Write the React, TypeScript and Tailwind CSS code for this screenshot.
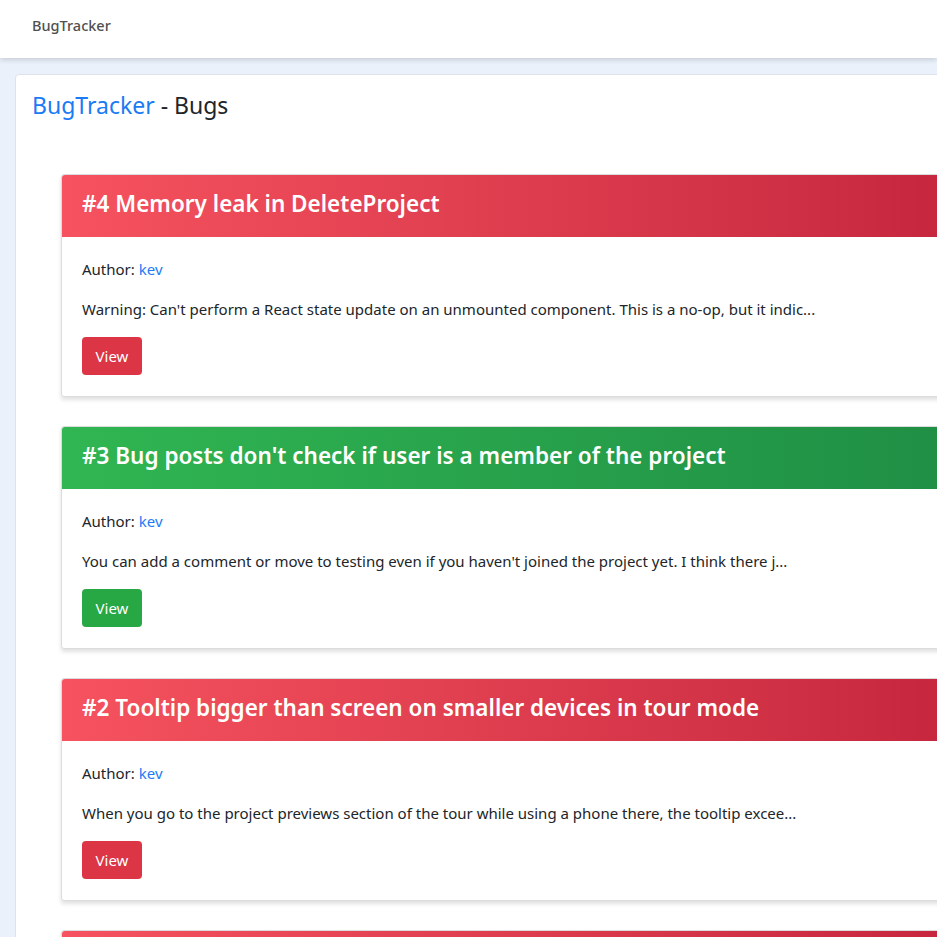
type Bug = {
  id: number;
  title: string;
  author: string;
  description: string;
  status: "open" | "testing";
};

const bugs: Bug[] = [
  {
    id: 4,
    title: "Memory leak in DeleteProject",
    author: "kev",
    description:
      "Warning: Can't perform a React state update on an unmounted component. This is a no-op, but it indic...",
    status: "open",
  },
  {
    id: 3,
    title: "Bug posts don't check if user is a member of the project",
    author: "kev",
    description:
      "You can add a comment or move to testing even if you haven't joined the project yet. I think there j...",
    status: "testing",
  },
  {
    id: 2,
    title: "Tooltip bigger than screen on smaller devices in tour mode",
    author: "kev",
    description:
      "When you go to the project previews section of the tour while using a phone there, the tooltip excee...",
    status: "open",
  },
  {
    id: 1,
    title: "Dashboard does not refresh after creating a project",
    author: "kev",
    description: "After creating a new project the dashboard keeps showing the old list...",
    status: "open",
  },
];

// 버그 카드
function BugCard({ bug }: { bug: Bug }) {
  const isOpen = bug.status === "open";

  return (
    <div className="w-[1000px] shrink-0 rounded-[3px] border border-[#dcdcdc] bg-white shadow-[0_3px_4px_rgba(0,0,0,0.12)]">
      <div
        className={
          isOpen
            ? "flex h-[62px] items-center rounded-t-[3px] bg-gradient-to-r from-[#f6525f] to-[#c0203a] px-[20px] pb-[5px]"
            : "flex h-[62px] items-center rounded-t-[3px] bg-gradient-to-r from-[#30b652] to-[#1d8a43] px-[20px] pb-[5px]"
        }
      >
        <h3 className="text-[22.5px] font-semibold text-white">
          #{bug.id} {bug.title}
        </h3>
      </div>
      <div className="px-[20px] pt-[21px] pb-[21px] text-[15px] text-[#212529]">
        <p className="leading-[22px]">
          Author: <span className="text-[#1a7bf5]">{bug.author}</span>
        </p>
        <p className="mt-[18px] leading-[22px]">{bug.description}</p>
        <button
          type="button"
          className={
            isOpen
              ? "mt-[17px] h-[38px] w-[60px] rounded-[4px] bg-[#dc3545] text-[15px] text-white"
              : "mt-[17px] h-[38px] w-[60px] rounded-[4px] bg-[#28a745] text-[15px] text-white"
          }
        >
          View
        </button>
      </div>
    </div>
  );
}

export default function App() {
  return (
    <div
      className="h-[937px] w-[937px] overflow-hidden bg-[#eaf1fb]"
      style={{ fontFamily: '"Noto Sans", "Open Sans", sans-serif' }}
    >
      {/* 상단 네비게이션 */}
      <nav className="flex h-[58px] items-center bg-white px-[32px] pb-[6px] shadow-[0_2px_5px_rgba(0,0,0,0.15)]">
        <span className="text-[14.5px] font-medium text-[#505050]">
          BugTracker
        </span>
      </nav>

      {/* 메인 영역 */}
      <div className="ml-[15px] mt-[16px] w-[1100px] rounded-[4px] border border-[#dde3ea] bg-white px-[16px] pt-[13px]">
        <h2 className="text-[23px] leading-[34px] text-[#212529]">
          <span className="text-[#1a7bf5]">BugTracker</span> - Bugs
        </h2>

        <div className="mt-[52px] flex flex-col gap-[29px] pl-[29px]">
          {bugs.map((bug) => (
            <BugCard key={bug.id} bug={bug} />
          ))}
        </div>
      </div>
    </div>
  );
}
